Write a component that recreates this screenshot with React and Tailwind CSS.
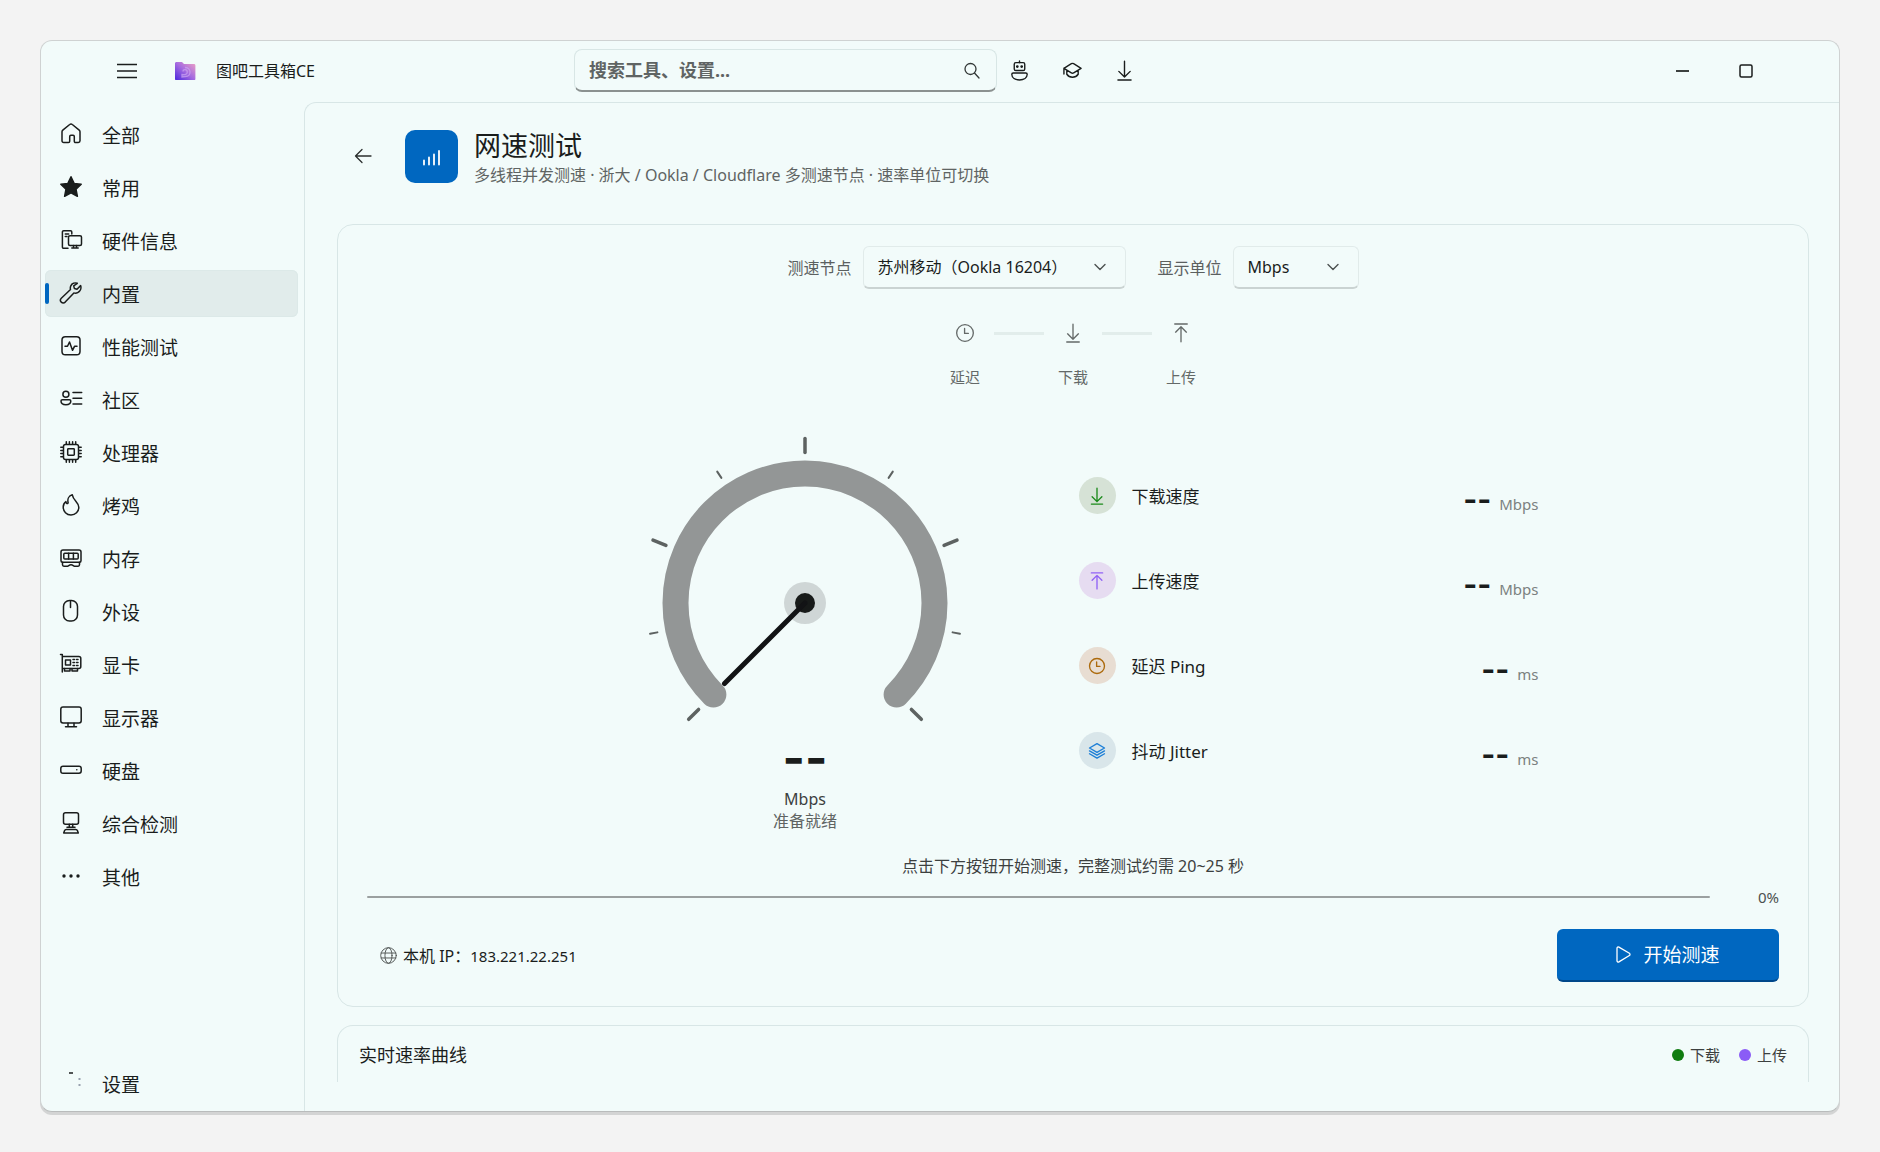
import React from "react";

const Svg = ({ size = 24, sw = 1.5, className = "", children }) => (
  <svg
    width={size}
    height={size}
    viewBox="0 0 24 24"
    fill="none"
    stroke="currentColor"
    strokeWidth={sw}
    strokeLinecap="round"
    strokeLinejoin="round"
    className={"shrink-0 " + className}
    aria-hidden="true"
  >
    {children}
  </svg>
);

const icons = {
  home: (
    <path d="M3 9.800c0-.7.300-1.300.8-1.700l6.900-5.600c.8-.7 1.800-.7 2.600 0l6.900 5.600c.5.4.8 1 .8 1.700v9c0 1-.7 1.700-1.700 1.700h-2.700c-.8 0-1.300-.5-1.300-1.300v-4.700c0-.7-.5-1.200-1.200-1.200h-2.200c-.7 0-1.200.5-1.200 1.200v4.700c0 .8-.5 1.300-1.300 1.300H4.700c-1 0-1.700-.7-1.700-1.700z" />
  ),
  star: (
    <path
      fill="currentColor"
      d="M12 1.800l3.100 6.600 7.100.9-5.200 4.900 1.400 7.100-6.400-3.500-6.400 3.500L7 14.200 1.800 9.300l7.100-.9z"
    />
  ),
  hardware: (
    <g>
      <path d="M9 20.200H4.700c-.8 0-1.300-.5-1.300-1.300V4.100c0-.8.5-1.300 1.300-1.300h6.800c.8 0 1.300.5 1.300 1.300v2" />
      <path d="M6.300 6h3.400M6.300 8.500h1.700" />
      <rect x="9.500" y="7.700" width="13" height="9.700" rx="1.500" />
      <path d="M14.500 17.500v2.300M17.500 17.500v2.300M12.800 20h6.400" />
    </g>
  ),
  wrench: (
    <path d="M18.300 2.300c-2.500-.9-5.300.1-6.500 2.500-.6 1.200-.6 2.500-.3 3.700L2.300 17.200c-1.100 1.100-1.100 2.800 0 3.900s2.800 1.100 3.900 0l8.700-9.200c1.200.4 2.600.3 3.800-.3 2.900-1.500 3.800-4.600 2.900-7l-3.600 3.600-2.600-.7-.7-2.600z" />
  ),
  perf: (
    <g>
      <rect x="3" y="2.800" width="18" height="18" rx="3.300" />
      <path d="M6 12.300h2.500L10.500 8l3 8.300 2-4h2.500" />
    </g>
  ),
  community: (
    <g>
      <circle cx="6.900" cy="7.300" r="3" />
      <path d="M3.400 12.700h7c.9 0 1.400.6 1.400 1.400 0 2.200-2 3.700-4.900 3.700S2 16.300 2 14.100c0-.8.500-1.400 1.400-1.400z" />
      <path d="M14 5.500h8.700M14 11.300h8.700M14 17.100h8.700" />
    </g>
  ),
  cpu: (
    <g>
      <rect x="4.500" y="4.500" width="15" height="15" rx="2" />
      <rect x="8.700" y="8.700" width="6.600" height="6.600" rx=".7" />
      <path d="M7.300 1.800v2.500M10.400 1.800v2.500M13.600 1.800v2.500M16.700 1.800v2.500M7.300 19.700v2.500M10.400 19.700v2.500M13.600 19.700v2.500M16.700 19.700v2.500M1.800 7.300h2.500M1.800 10.400h2.500M1.800 13.600h2.500M1.800 16.700h2.500M19.700 7.300h2.500M19.700 10.400h2.500M19.700 13.600h2.500M19.700 16.700h2.500" />
    </g>
  ),
  flame: (
    <path d="M13.300 1.800c-3.600 1-5 4.400-4.200 7.700.2.900-.9 1.500-1.500.7-.4-.5-.6-1-.7-1.600-1.800 1.300-2.700 3.400-2.700 5.400 0 4.500 3.400 8 7.800 8s7.800-3.300 7.800-7.700c0-5.300-5.500-6.500-6.500-12.500z" />
  ),
  memory: (
    <g>
      <path d="M3.500 16.300c-1 0-1.500-.6-1.500-1.500V6c0-1.200.8-2 2-2h16c1.200 0 2 .8 2 2v8.800c0 .9-.5 1.500-1.500 1.500z" />
      <rect x="4.800" y="7.300" width="14.400" height="5.800" rx="1" />
      <path d="M9.600 7.300v5.800M14.400 7.300v5.800M3.500 16.300v2.500c0 .9.500 1.400 1.400 1.400h3.700c1 0 1.500-1.500 3.400-1.500s2.400 1.500 3.400 1.500h3.700c.9 0 1.400-.5 1.400-1.400v-2.500" />
    </g>
  ),
  mouse: (
    <g>
      <rect x="4.500" y="1.500" width="14" height="20.500" rx="6" />
      <path d="M11.500 2v6.500" />
    </g>
  ),
  gpu: (
    <g>
      <path d="M1.500 2.500h1.800v17.500M3.300 4.500h16.500c1.200 0 2 .8 2 2v8c0 1.200-.8 2-2 2H3.300" />
      <rect x="6.500" y="8" width="5" height="5" />
      <path d="M5.500 16.500v2.500h5.500v-2.500M13 16.500v2.500h5.500v-2.500" />
      <path strokeDasharray="1.500 2" d="M14 7.500h6M14 10.500h6M14 13.500h6" />
    </g>
  ),
  monitor: (
    <g>
      <rect x="1.800" y="2" width="20.400" height="16" rx="2.200" />
      <path d="M9 18.200v3.300M15 18.200v3.300M6.500 21.800h11" />
    </g>
  ),
  disk: (
    <g>
      <rect x="1.800" y="8.300" width="20.400" height="7" rx="2.200" />
      <circle cx="17.800" cy="11.800" r=".8" fill="currentColor" stroke="none" />
    </g>
  ),
  station: (
    <g>
      <rect x="4.500" y="1.800" width="15" height="11.400" rx="2" />
      <path d="M10.300 13.300v2.700M13.700 13.300v2.700M8 16.200h8" />
      <path d="M7.200 18.400h9.600c.8 0 1.300.4 1.600 1.100l.9 2.500H4.700l.9-2.500c.3-.7.8-1.100 1.600-1.100z" />
    </g>
  ),
  dots: (
    <g fill="currentColor" stroke="none">
      <circle cx="5" cy="12" r="1.700" />
      <circle cx="12" cy="12" r="1.700" />
      <circle cx="19" cy="12" r="1.700" />
    </g>
  ),
  settings: (
    <g strokeLinecap="butt">
      <path d="M10 2h4" />
      <path strokeWidth="2" className="text-gray-400" d="M20.500 7v2M20.500 13v2" />
    </g>
  ),
  clock: (
    <g>
      <circle cx="12" cy="12" r="10" />
      <path d="M11.500 6.500v6h4.500" />
    </g>
  ),
  down: <path d="M12 1.500v18M5.500 13l6.500 6.500 6.500-6.500M4.500 22.800h15" />,
  up: <path d="M12 22.500v-18M5.500 11l6.500-6.500 6.500 6.500M4.500 1.200h15" />,
  layers: (
    <g>
      <path d="M12 2.200l10 5.800-10 5.800L2 8z" />
      <path d="M2 11.800l10 5.800 10-5.800M2 15.700l10 5.800 10-5.800" />
    </g>
  ),
  globe: (
    <g>
      <circle cx="12" cy="12" r="11" />
      <ellipse cx="12" cy="12" rx="5" ry="11" />
      <path d="M1.800 8.500h20.400M1.800 15.500h20.400" />
    </g>
  ),
  robot: (
    <g>
      <rect x="6" y="3" width="12" height="9" rx="1.800" />
      <path d="M12 1v2" />
      <circle cx="9.500" cy="7.500" r=".8" fill="currentColor" />
      <circle cx="14.500" cy="7.500" r=".8" fill="currentColor" />
      <path d="M4.800 14.800h14.400c1 0 1.600.7 1.600 1.600 0 4-3.800 6.400-8.800 6.400s-8.800-2.400-8.800-6.400c0-.9.600-1.600 1.600-1.600z" />
    </g>
  ),
  cap: (
    <g>
      <path d="M12 3.800c.5 0 .9.100 1.300.4l8.500 5.300-8.500 5.300c-.8.500-1.800.5-2.600 0L2.200 9.500l8.500-5.300c.4-.3.800-.4 1.300-.4zM2.200 9.500v6.500M5.500 12v4.300c3 4.500 10 4.500 13 0V12" />
    </g>
  ),
};

const navItems = [
  ["home", "全部"],
  ["star", "常用"],
  ["hardware", "硬件信息"],
  ["wrench", "内置"],
  ["perf", "性能测试"],
  ["community", "社区"],
  ["cpu", "处理器"],
  ["flame", "烤鸡"],
  ["memory", "内存"],
  ["mouse", "外设"],
  ["gpu", "显卡"],
  ["monitor", "显示器"],
  ["disk", "硬盘"],
  ["station", "综合检测"],
  ["dots", "其他"],
];

const NavButton = ({ icon, label, active }) => (
  <button
    type="button"
    aria-current={active ? "page" : undefined}
    className={
      "relative flex h-[47px] w-full items-center gap-[19px] rounded-md pl-[14px] text-left text-[19px] leading-6 " +
      (active ? "bg-[#e1eceb] ring-1 ring-inset ring-[#dce9e8]" : "")
    }
  >
    {active && <span className="absolute left-0 h-[21px] w-1 rounded-full bg-[#0067c0]" />}
    <Svg className="-mt-[2px]">{icons[icon]}</Svg>
    <span className="pt-[2px]">{label}</span>
  </button>
);

const Chevron = () => (
  <svg
    width="14"
    height="14"
    viewBox="0 0 14 14"
    fill="none"
    stroke="#4c5150"
    strokeWidth="1.4"
    strokeLinecap="round"
    strokeLinejoin="round"
    className="pointer-events-none absolute top-[14px] right-[19px]"
    aria-hidden="true"
  >
    <path d="M2 4.500l5 5 5-5" />
  </svg>
);

const Combo = ({ id, label, value, width }) => (
  <div className="flex items-center gap-[11px]">
    <label htmlFor={id} className="text-[16px] text-[#5b605f]">
      {label}
    </label>
    <div className={"relative " + width}>
      <select
        id={id}
        className="h-[43px] w-full appearance-none rounded-md border border-[#e1ebea] border-b-2 border-b-[#cad3d2] bg-transparent pl-[14px] text-[16px] text-[#1a1d1c]"
      >
        <option>{value}</option>
      </select>
      <Chevron />
    </div>
  </div>
);

const Step = ({ icon, label }) => (
  <div className="flex w-[58px] flex-col items-center gap-[22px] text-[#646968]">
    <Svg size={20} sw={1.6}>
      {icons[icon]}
    </Svg>
    <span className="text-[15px] leading-6">{label}</span>
  </div>
);

const tickAngles = [-135, -101.25, -67.5, -33.75, 0, 33.75, 67.5, 101.25, 135];

const Gauge = () => (
  <svg width="340" height="300" viewBox="-170 -170 340 300" aria-label="速度表" role="img">
    <path
      d="M-91.600 91.600A129.500 129.500 0 1 1 91.600 91.600"
      fill="none"
      stroke="#939696"
      strokeWidth="26"
      strokeLinecap="round"
    />
    {tickAngles.map((a, i) => (
      <line
        key={a}
        x1="0"
        x2="0"
        y1="-150.500"
        y2={i % 2 === 0 ? "-164.500" : "-158"}
        stroke="#5d6261"
        strokeWidth={i % 2 === 0 ? 3.5 : 2}
        strokeLinecap="round"
        transform={`rotate(${a})`}
      />
    ))}
    <circle r="21" fill="#cfd6d6" />
    <circle r="10" fill="#171a19" />
    <line x1="0" y1="0" x2="-80.500" y2="80.500" stroke="#121315" strokeWidth="5" strokeLinecap="round" />
  </svg>
);

const metrics = [
  { icon: "down", label: "下载速度", unit: "Mbps", tone: "bg-[#d6e2d6] text-[#1b8a1b]" },
  { icon: "up", label: "上传速度", unit: "Mbps", tone: "bg-[#e6dcf1] text-[#9163f5]" },
  { icon: "clock", label: "延迟 Ping", unit: "ms", tone: "bg-[#e8ddd2] text-[#ac6a0c]" },
  { icon: "layers", label: "抖动 Jitter", unit: "ms", tone: "bg-[#d9e6ea] text-[#1d7fd6]" },
];

const IconButton = ({ label, children, className = "" }) => (
  <button type="button" aria-label={label} className={"flex h-10 items-center justify-center " + className}>
    {children}
  </button>
);

const Legend = ({ color, label }) => (
  <span className="flex items-center gap-[6px]">
    <span className={"h-3 w-3 rounded-full " + color} />
    {label}
  </span>
);

export default function App() {
  return (
    <div className="flex h-screen min-h-[1152px] flex-col bg-[#f3f3f3] px-10 pt-10 pb-10 font-['Noto_Sans','Noto_Sans_CJK_SC',sans-serif] text-[#1a1d1c]">
      <div className="flex flex-1 flex-col overflow-hidden rounded-xl border border-[#cfd2d2] border-b-[#b9bcbc] bg-[#f2fbfa] shadow-[0_3px_0_#d3d4d4]">
        <header className="flex h-[61px] shrink-0 items-center pb-[2px]">
          <div className="flex w-[533px] items-center">
            <IconButton label="菜单" className="ml-[66px] w-10">
              <svg width="22" height="16" stroke="#1a1d1c" strokeWidth="1.500" aria-hidden="true">
                <path d="M1 1.500h20M1 8h20M1 14.500h20" />
              </svg>
            </IconButton>
            <svg width="22" height="20" viewBox="0 0 22 20" className="ml-[27px]" aria-hidden="true">
              <defs>
                <linearGradient id="folder" x1="0" y1="1" x2="1" y2="0">
                  <stop offset="0" stopColor="#4b28dc" />
                  <stop offset=".5" stopColor="#a66be0" />
                  <stop offset="1" stopColor="#f0a3c4" />
                </linearGradient>
              </defs>
              <path d="M1 2.500C1 1.600 1.600 1 2.500 1H8l2 2h10c.8 0 1.400.6 1.400 1.400V18c0 .6-.4 1-1 1H2c-.6 0-1-.4-1-1z" fill="url(#folder)" />
              <path d="M11 6.500c3 0 5 2 5 4.500 0 2.800-2 4.500-4.500 4.500L8 16v-2.500c3 .8 5.300-.4 5.300-2.500 0-1.500-1-2.300-2.300-2.300S9 9.500 9 10.500" fill="none" stroke="#c9a2f0" strokeWidth="1.300" opacity=".75" />
            </svg>
            <h1 className="ml-5 text-[16px]">图吧工具箱CE</h1>
          </div>
          <div className="relative w-[423px]">
            <input
              type="search"
              aria-label="搜索工具、设置"
              placeholder="搜索工具、设置..."
              className="h-[43px] w-full rounded-lg border border-[#d8e6e5] border-b-2 border-b-[#8b9190] bg-transparent pl-[14px] text-[18px] font-bold placeholder:text-[#5f6463]"
            />
            <svg width="18" height="18" viewBox="0 0 18 18" fill="none" stroke="#333837" strokeWidth="1.300" strokeLinecap="round" className="absolute top-[13px] right-4" aria-hidden="true">
              <circle cx="7.500" cy="7" r="5.500" />
              <path d="M11.500 11l4.500 5" />
            </svg>
          </div>
          <div className="flex flex-1 items-center">
            <IconButton label="助手" className="ml-[2px] w-10">
              <Svg size={21} sw={1.6}>{icons.robot}</Svg>
            </IconButton>
            <IconButton label="教程" className="ml-[13px] w-10">
              <Svg size={21} sw={1.6}>{icons.cap}</Svg>
            </IconButton>
            <IconButton label="下载" className="ml-3 w-10">
              <Svg size={21} sw={1.6}>{icons.down}</Svg>
            </IconButton>
            <div className="mr-[73px] ml-auto flex gap-6">
              <IconButton label="最小化" className="w-10">
                <span className="h-[2px] w-[13px] bg-[#3c403f]" />
              </IconButton>
              <IconButton label="最大化" className="w-10">
                <svg width="14" height="14" viewBox="0 0 14 14" fill="none" stroke="#1a1d1c" strokeWidth="1.500" aria-hidden="true">
                  <rect x="1" y="1" width="12" height="12" rx="1.500" />
                </svg>
              </IconButton>
            </div>
          </div>
        </header>

        <div className="flex flex-1">
          <aside className="flex w-[263px] shrink-0 flex-col pt-[9px] pr-[6px] pb-1 pl-1">
            <nav className="flex flex-1 flex-col justify-between">
              {navItems.map(([icon, label]) => (
                <NavButton key={label} icon={icon} label={label} active={label === "内置"} />
              ))}
            </nav>
            <div className="pt-[159px]">
              <NavButton icon="settings" label="设置" />
            </div>
          </aside>

          <main className="flex flex-1 flex-col rounded-tl-xl border-t border-l border-[#d8e6e6] pr-[30px] pl-8">
            <div className="flex items-center gap-4 pt-[22px]">
              <IconButton label="返回" className="ml-2 w-9">
                <svg width="18" height="16" viewBox="0 0 18 16" fill="none" stroke="#2b2f2e" strokeWidth="1.300" strokeLinecap="round" strokeLinejoin="round" aria-hidden="true">
                  <path d="M17 8H1.500M8 1.500L1.500 8l6.500 6.500" />
                </svg>
              </IconButton>
              <div className="ml-2 flex h-[53px] w-[53px] items-center justify-center rounded-[10px] bg-[#0067c0]">
                <svg width="20" height="20" viewBox="0 0 20 20" stroke="#ffffff" strokeWidth="1.800" strokeLinecap="round" aria-hidden="true">
                  <path d="M2 14.500v4M7 11.500v7M12 8.500v10M17 5v13.500" />
                </svg>
              </div>
              <div className="pt-1">
                <h2 className="text-[27px] leading-[34px]">网速测试</h2>
                <p className="text-[16px] leading-6 text-[#5f6463]">
                  多线程并发测速 · 浙大 / Ookla / Cloudflare 多测速节点 · 速率单位可切换
                </p>
              </div>
            </div>

            <section className="mt-[37px] flex flex-col rounded-2xl border border-[#d8e6e6] px-[29px] pt-[21px] pb-6">
              <div className="flex justify-center gap-8">
                <Combo id="node" label="测速节点" value="苏州移动（Ookla 16204）" width="w-[263px]" />
                <Combo id="unit" label="显示单位" value="Mbps" width="w-[126px]" />
              </div>

              <div className="mt-[34px] flex justify-center">
                <Step icon="clock" label="延迟" />
                <span className="mt-[9px] h-[3px] w-[50px] bg-[#e2edeb]" />
                <Step icon="down" label="下载" />
                <span className="mt-[9px] h-[3px] w-[50px] bg-[#e2edeb]" />
                <Step icon="up" label="上传" />
              </div>

              <div className="mt-11 flex justify-center gap-[76px]">
                <div className="flex w-[395px] flex-col items-center">
                  <Gauge />
                  <span className="mb-[5px] font-['Inter'] text-[48px] leading-[50px] font-bold">--</span>
                  <span className="text-[16px] leading-[22px] text-[#3c403f]">Mbps</span>
                  <span className="text-[16px] leading-[22px] text-[#5f6463]">准备就绪</span>
                </div>
                <div className="flex w-[460px] flex-col pt-5">
                  {metrics.map((m) => (
                    <div key={m.label} className="flex h-[85px] items-center">
                      <span className={"flex h-[37px] w-[37px] items-center justify-center rounded-full " + m.tone}>
                        <Svg size={18} sw={1.8}>{icons[m.icon]}</Svg>
                      </span>
                      <span className="ml-4 pt-[2px] text-[17px]">{m.label}</span>
                      <span className="ml-auto flex items-baseline gap-2 pt-[6px]">
                        <span className="font-['Inter'] text-[30px] leading-9 font-bold">--</span>
                        <span className="text-[15px] text-[#7b8180]">{m.unit}</span>
                      </span>
                    </div>
                  ))}
                </div>
              </div>

              <p className="mt-[22px] text-center text-[16px] leading-6 text-[#3c403f]">
                点击下方按钮开始测速，完整测试约需 20~25 秒
              </p>
              <div className="mt-[7px] flex items-center">
                <div role="progressbar" aria-valuenow={0} aria-label="测速进度" className="h-[2px] flex-1 rounded-full bg-[#9ba0a0]" />
                <span className="w-[69px] text-right text-[15px] leading-6 text-[#4c5150]">0%</span>
              </div>
              <div className="mt-5 flex items-center justify-between pl-[13px]">
                <p className="flex items-center gap-[6px] text-[16px]">
                  <Svg size={17} sw={1.3} className="text-[#4c5150]">{icons.globe}</Svg>
                  <span>本机 IP：<span className="text-[15px]">183.221.22.251</span></span>
                </p>
                <button
                  type="button"
                  className="flex h-[53px] w-[222px] items-center justify-center gap-3 rounded-md border-b-2 border-[#00478a] bg-[#0067c0] text-[19px] text-white"
                >
                  <svg width="15" height="17" viewBox="0 0 15 17" fill="none" stroke="currentColor" strokeWidth="1.300" strokeLinejoin="round" aria-hidden="true">
                    <path d="M1 2.200c0-1 1-1.600 1.900-1.100l10.500 6.200c.8.500.8 1.700 0 2.200L2.900 15.900C2 16.400 1 15.800 1 14.800z" />
                  </svg>
                  <span className="pt-[2px]">开始测速</span>
                </button>
              </div>
            </section>

            <section className="mt-[18px] flex h-[57px] items-center justify-between rounded-t-2xl border-x border-t border-[#d8e6e6] px-[21px] pt-[2px]">
              <h3 className="text-[18px]">实时速率曲线</h3>
              <div className="flex gap-[19px] text-[15px] text-[#3c403f]">
                <Legend color="bg-[#107c10]" label="下载" />
                <Legend color="bg-[#8b5cf6]" label="上传" />
              </div>
            </section>
          </main>
        </div>
      </div>
    </div>
  );
}
